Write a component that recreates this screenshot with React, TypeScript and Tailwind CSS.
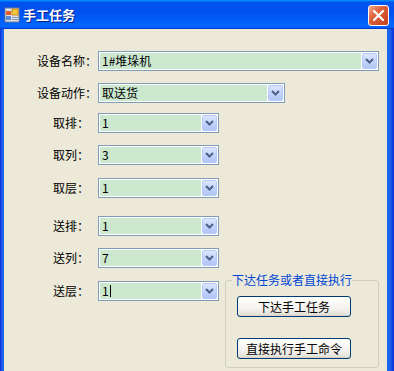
import React from 'react'

interface ComboProps {
  value: string
  widthClass: string
  caret?: boolean
}

// XP style combobox with green background and blue dropdown button
function Combo({ value, widthClass, caret }: ComboProps) {
  return (
    <div className={`${widthClass} h-[20px] flex border border-[#7F9DB9] bg-white p-[1px]`}>
      <div className="flex-1 flex items-center bg-[#CCE8CF] pl-[2px] text-[12px] leading-[16px] text-black">
        <span>{value}</span>
        {caret && <span className="ml-[1px] w-[1px] h-[12px] bg-black" />}
      </div>
      <div className="ml-[1px] w-[15px] flex items-center justify-center rounded-[2px] border border-[#B7C9F5] bg-[linear-gradient(180deg,#DCE6FE,#C3D4FC_50%,#B2C6F6)]">
        <svg width="9" height="6" viewBox="0 0 9 6">
          <path d="M1 1l3.5 3.5L8 1" fill="none" stroke="#4D6185" strokeWidth={2} />
        </svg>
      </div>
    </div>
  )
}

function Label({ text, long }: { text: string; long?: boolean }) {
  return (
    <span className={`w-[94px] shrink-0 text-right text-[12px] leading-[20px] text-black ${long ? 'pr-[1px]' : 'pr-[9px]'}`}>
      {text}
    </span>
  )
}

function XpButton({ text, className }: { text: string; className?: string }) {
  return (
    <button
      className={`w-[114px] h-[21px] rounded-[3px] border border-[#003C74] bg-[linear-gradient(180deg,#FFFFFF,#F3F2EE_60%,#E6E3DA_90%,#D6D0C5)] text-[12px] leading-[19px] text-black ${className ?? ''}`}
    >
      {text}
    </button>
  )
}

export default function App() {
  return (
    <div className="w-[394px] h-[371px] flex flex-col overflow-hidden font-['Noto_Sans_CJK_SC',sans-serif]">
      {/* Title bar */}
      <div className="h-[29px] shrink-0 flex items-start justify-between bg-[linear-gradient(180deg,#0997FF,#0053EE_8%,#0050EE_40%,#0066FF_88%,#0066FF_93%,#005BFF_95%,#003DD7_96%,#003DD7)]">
        <div className="flex items-center gap-[3px] pl-[4px] pt-[7px]">
          <svg width="16" height="16" viewBox="0 0 16 16">
            <rect x="1" y="1" width="14" height="14" fill="#DDE1E8" stroke="#6B7A90" />
            <rect x="8" y="2" width="6" height="6" fill="#F6C83C" stroke="#C27A12" strokeWidth={0.8} />
            <rect x="2" y="4" width="5" height="4" fill="#E2602C" />
            <rect x="2" y="9" width="5" height="4" fill="#5B8AD8" />
            <rect x="8" y="10" width="6" height="1" fill="#8A96A8" />
            <rect x="8" y="12" width="6" height="1" fill="#8A96A8" />
          </svg>
          <span className="text-[13px] leading-[16px] font-bold text-white [text-shadow:1px_1px_0_#0A1F8A]">手工任务</span>
        </div>
        <div className="mt-[5px] mr-[5px] w-[21px] h-[21px] flex items-center justify-center rounded-[3px] border border-white bg-[linear-gradient(135deg,#F4A58A,#E0603A_40%,#C53E1C)]">
          <svg width="13" height="13" viewBox="0 0 13 13">
            <path d="M2 2l9 9M11 2l-9 9" stroke="white" strokeWidth={2.2} strokeLinecap="round" />
          </svg>
        </div>
      </div>

      <div className="flex-1 flex">
        <div className="w-[4px] bg-[linear-gradient(90deg,#0831D9,#1E5BEA_50%,#166AEE)]" />
        <div className="flex-1 bg-[#ECE9D8] flex flex-col pt-[22px]">
          <div className="flex items-center h-[20px]">
            <Label text="设备名称：" long />
            <Combo value="1#堆垛机" widthClass="w-[281px]" />
          </div>
          <div className="flex items-center h-[20px] mt-[12px]">
            <Label text="设备动作：" long />
            <Combo value="取送货" widthClass="w-[187px]" />
          </div>
          <div className="flex items-center h-[20px] mt-[10px]">
            <Label text="取排：" />
            <Combo value="1" widthClass="w-[121px]" />
          </div>
          <div className="flex items-center h-[20px] mt-[12px]">
            <Label text="取列：" />
            <Combo value="3" widthClass="w-[121px]" />
          </div>
          <div className="flex items-center h-[20px] mt-[13px]">
            <Label text="取层：" />
            <Combo value="1" widthClass="w-[121px]" />
          </div>
          <div className="flex items-center h-[20px] mt-[18px]">
            <Label text="送排：" />
            <Combo value="1" widthClass="w-[121px]" />
          </div>
          <div className="flex items-center h-[20px] mt-[12px]">
            <Label text="送列：" />
            <Combo value="7" widthClass="w-[121px]" />
          </div>
          <div className="flex items-start">
            <div className="flex items-center h-[20px] mt-[13px]">
              <Label text="送层：" />
              <Combo value="1" widthClass="w-[121px]" caret />
            </div>
            <fieldset className="ml-[6px] mt-[4px] w-[154px] h-[96px] rounded-[3px] border border-[#D0D0BF] flex flex-col">
              <legend className="ml-[6px] text-[12px] leading-[16px] text-[#0046D5]">下达任务或者直接执行</legend>
              <XpButton text="下达手工任务" className="mt-[8px] ml-[11px]" />
              <XpButton text="直接执行手工命令" className="mt-[21px] ml-[11px]" />
            </fieldset>
          </div>
        </div>
        <div className="w-[7px] bg-[linear-gradient(90deg,#166AEE,#1E5BEA_50%,#0831D9)]" />
      </div>
    </div>
  )
}
